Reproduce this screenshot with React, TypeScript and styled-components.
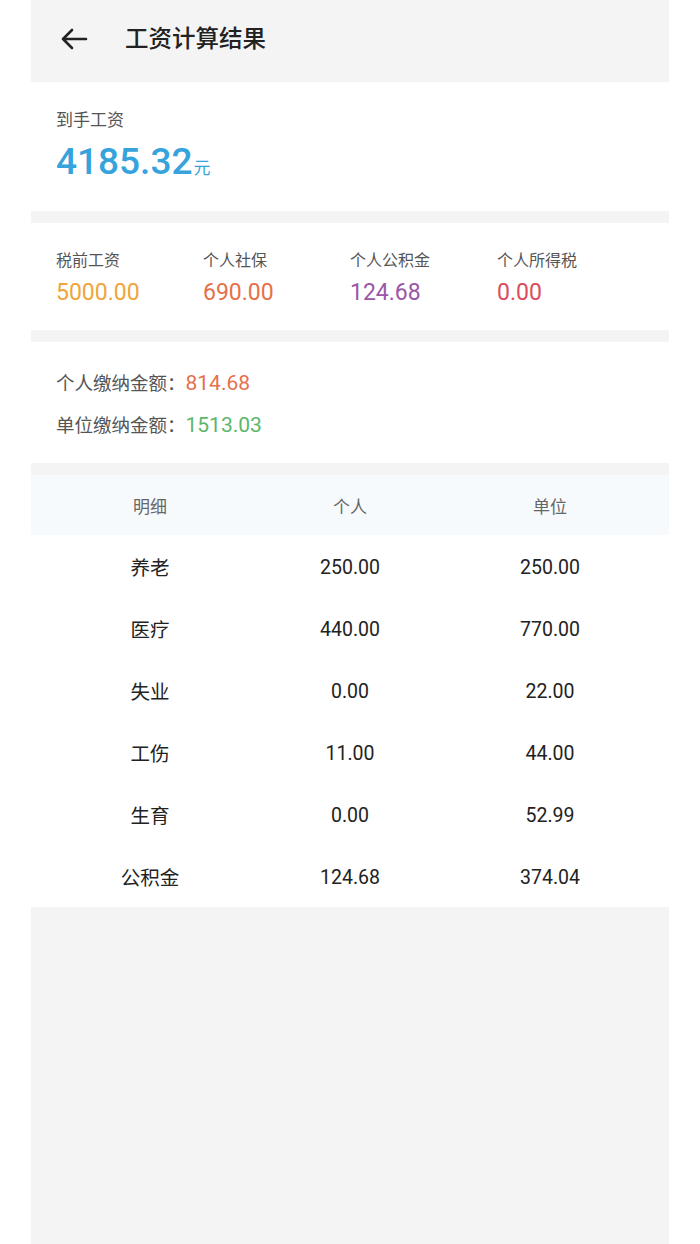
import React from "react";
import styled, { createGlobalStyle } from "styled-components";

const Global = createGlobalStyle`
  html, body { margin: 0; padding: 0; background: #ffffff; }
  body { font-family: Roboto, "Noto Sans CJK SC", "Noto Sans", sans-serif; }
  * { box-sizing: border-box; }
`;

const Page = styled.div`
  width: 638px;
  margin: 0 auto;
  min-height: 1244px;
  background: #f4f4f4;
  display: flex;
  flex-direction: column;
`;

const Header = styled.div`
  height: 82px;
  display: flex;
  align-items: center;
  padding: 0 0 4px 29px;
`;

const BackButton = styled.div`
  width: 28px;
  height: 28px;
  display: flex;
  align-items: center;
  justify-content: center;
`;

const Title = styled.div`
  margin-left: 37px;
  font-size: 23.5px;
  color: #222222;
  font-weight: 500;
  line-height: 30px;
`;

const Card = styled.div<{ $gap?: number; $pt: number; $pb: number }>`
  background: #ffffff;
  margin-top: ${(p) => p.$gap ?? 0}px;
  padding: ${(p) => p.$pt}px 25px ${(p) => p.$pb}px;
`;

const Label = styled.div`
  font-size: 17px;
  line-height: 24px;
  color: #555555;
`;

const Amount = styled.div`
  display: flex;
  align-items: baseline;
  margin-top: 6px;
  color: #36a3dc;
`;

const AmountValue = styled.span`
  font-size: 37px;
  line-height: 48px;
  font-weight: 500;
`;

const Unit = styled.span`
  font-size: 17px;
  margin-left: 1px;
`;

const StatGrid = styled.div`
  display: grid;
  grid-template-columns: repeat(4, 1fr);
`;

const Stat = styled.div`
  display: flex;
  flex-direction: column;
`;

const StatLabel = styled.div`
  font-size: 16px;
  line-height: 22px;
  color: #555555;
`;

const StatValue = styled.div<{ $color: string }>`
  font-size: 23px;
  line-height: 30px;
  margin-top: 6px;
  color: ${(p) => p.$color};
`;

const PayRow = styled.div`
  display: flex;
  align-items: baseline;
  height: 42px;
  line-height: 42px;
`;

const PayLabel = styled.span`
  font-size: 18.5px;
  color: #555555;
`;

const PayValue = styled.span<{ $color: string }>`
  font-size: 21px;
  color: ${(p) => p.$color};
`;

const Table = styled.div`
  margin-top: 12px;
  background: #ffffff;
`;

const TableRow = styled.div<{ $head?: boolean }>`
  display: grid;
  grid-template-columns: repeat(3, 1fr);
  padding: 0 19px;
  height: ${(p) => (p.$head ? 60 : 62)}px;
  align-items: center;
  background: ${(p) => (p.$head ? "#f7fafd" : "#ffffff")};
`;

const Cell = styled.div<{ $head?: boolean; $num?: boolean }>`
  text-align: center;
  font-size: ${(p) => (p.$head ? 17 : 19.5)}px;
  color: ${(p) => (p.$head ? "#666666" : "#222222")};
  padding-top: ${(p) => (p.$num ? 3 : 0)}px;
`;

const stats = [
  { label: "税前工资", value: "5000.00", color: "#f0a53a" },
  { label: "个人社保", value: "690.00", color: "#e5704b" },
  { label: "个人公积金", value: "124.68", color: "#9a57a6" },
  { label: "个人所得税", value: "0.00", color: "#dc4c5d" },
];

const rows = [
  ["养老", "250.00", "250.00"],
  ["医疗", "440.00", "770.00"],
  ["失业", "0.00", "22.00"],
  ["工伤", "11.00", "44.00"],
  ["生育", "0.00", "52.99"],
  ["公积金", "124.68", "374.04"],
];

export default function App() {
  return (
    <>
      <Global />
      <Page>
        <Header>
          <BackButton>
            <svg width="28" height="22" viewBox="0 0 28 22" fill="none">
              <path
                d="M26 11H3M12 2L3 11L12 20"
                stroke="#222222"
                strokeWidth="2.6"
                strokeLinecap="round"
                strokeLinejoin="round"
              />
            </svg>
          </BackButton>
          <Title>工资计算结果</Title>
        </Header>
        <Card $pt={26} $pb={25}>
          <Label>到手工资</Label>
          <Amount>
            <AmountValue>4185.32</AmountValue>
            <Unit>元</Unit>
          </Amount>
        </Card>
        <Card $gap={12} $pt={27} $pb={22}>
          <StatGrid>
            {stats.map((s) => (
              <Stat key={s.label}>
                <StatLabel>{s.label}</StatLabel>
                <StatValue $color={s.color}>{s.value}</StatValue>
              </Stat>
            ))}
          </StatGrid>
        </Card>
        <Card $gap={12} $pt={20} $pb={17}>
          <PayRow>
            <PayLabel>个人缴纳金额：</PayLabel>
            <PayValue $color="#e5704b">814.68</PayValue>
          </PayRow>
          <PayRow>
            <PayLabel>单位缴纳金额：</PayLabel>
            <PayValue $color="#5cb66c">1513.03</PayValue>
          </PayRow>
        </Card>
        <Table>
          <TableRow $head>
            <Cell $head>明细</Cell>
            <Cell $head>个人</Cell>
            <Cell $head>单位</Cell>
          </TableRow>
          {rows.map((r) => (
            <TableRow key={r[0]}>
              {r.map((c, i) => (
                <Cell key={i} $num={i > 0}>
                  {c}
                </Cell>
              ))}
            </TableRow>
          ))}
        </Table>
      </Page>
    </>
  );
}
